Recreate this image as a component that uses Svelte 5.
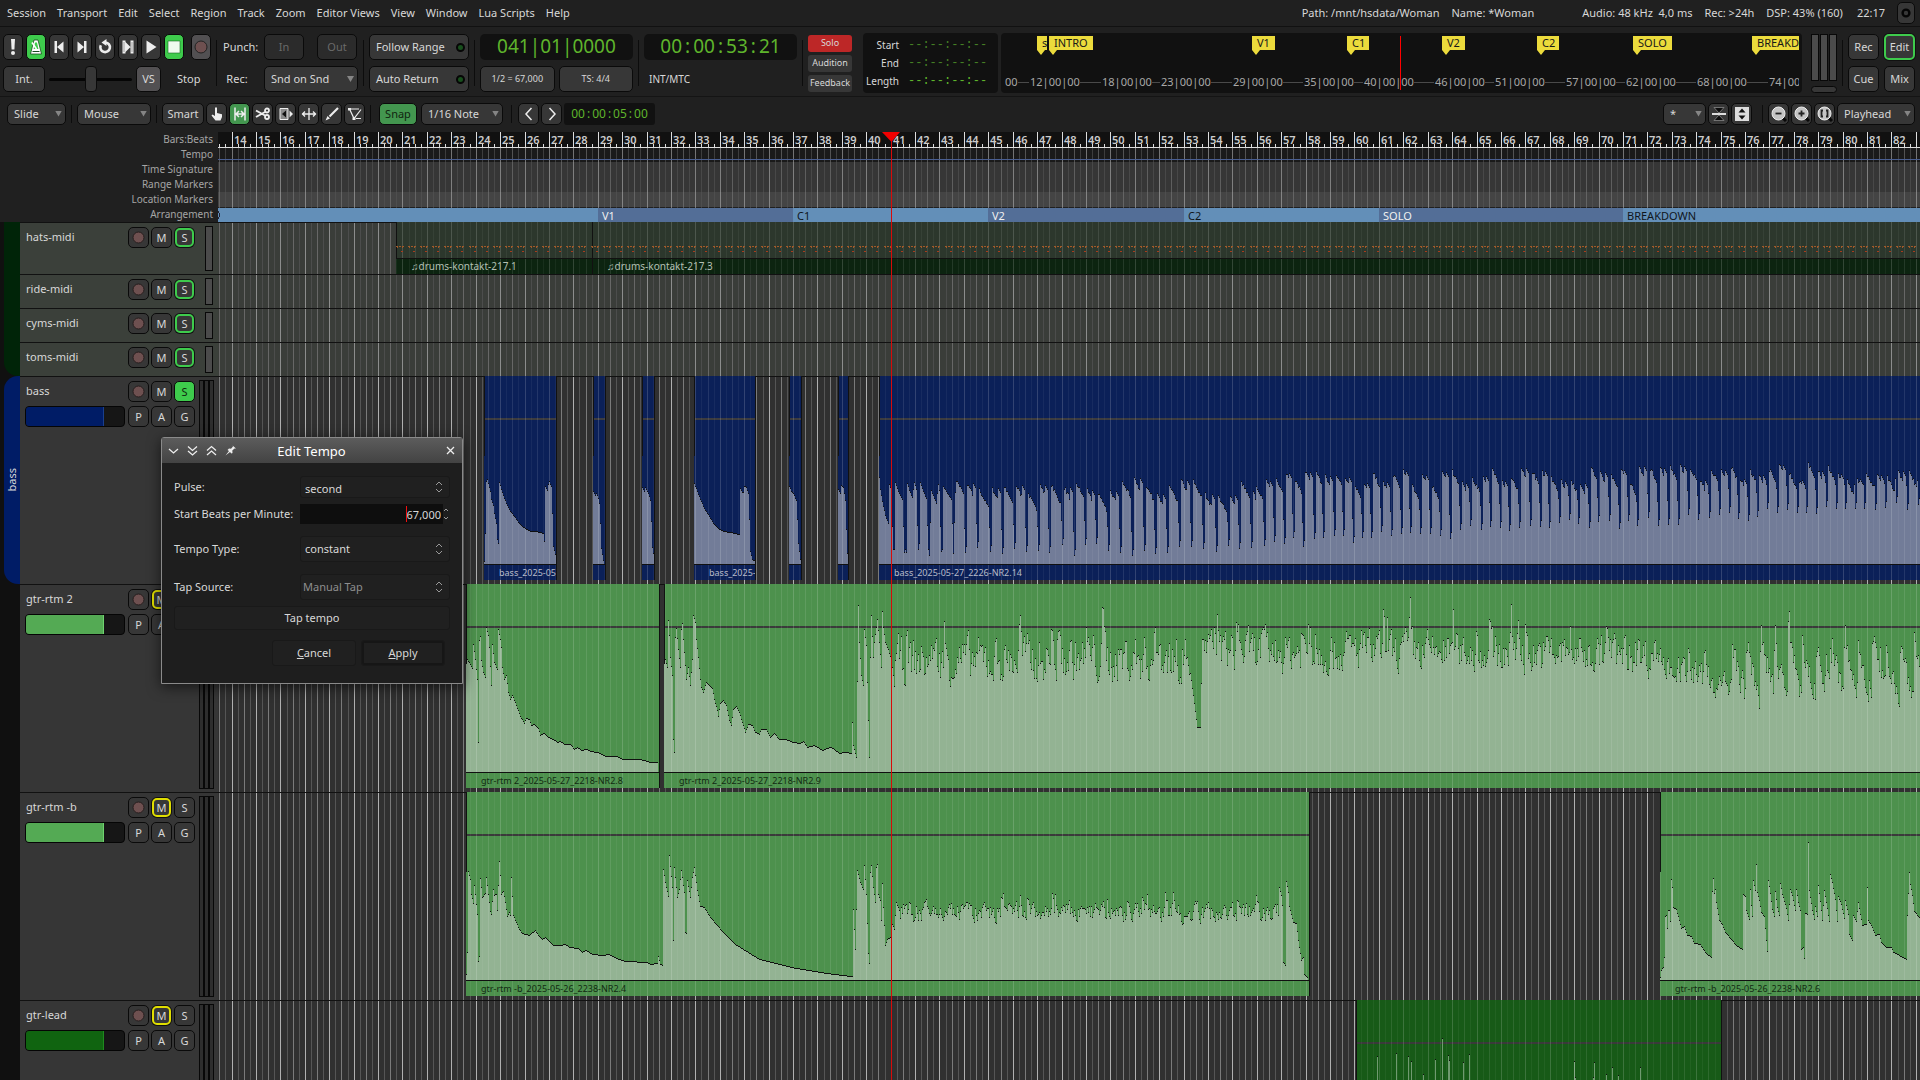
<script>
  const menus = ['Session', 'Transport', 'Edit', 'Select', 'Region', 'Track', 'Zoom', 'Editor Views', 'View', 'Window', 'Lua Scripts', 'Help']

  const flags = [
    { x: 36, w: 10, name: 's' },
    { x: 48, w: 44, name: 'INTRO' },
    { x: 251, w: 23, name: 'V1' },
    { x: 346, w: 22, name: 'C1' },
    { x: 441, w: 23, name: 'V2' },
    { x: 536, w: 22, name: 'C2' },
    { x: 632, w: 39, name: 'SOLO' },
    { x: 751, w: 60, name: 'BREAKDOWN' }
  ]
  const stamps = [[4, '00'], [29, '12'], [101, '18'], [160, '23'], [232, '29'], [303, '35'], [363, '40'], [434, '46'], [494, '51'], [565, '57'], [625, '62'], [696, '68'], [768, '74']]

  // timeline geometry: x of a bar line inside the canvas
  const BAR = 24.41
  const barX = (n) => Math.floor(14.1 + BAR * (n - 14))
  let rulerWidth = 0
  $: bars = Array.from({ length: 150 }, (_, i) => i + 14).filter((n) => barX(n) + 17 < rulerWidth)

  function lines(beats, top = 0) {
    let d = ''
    for (let n = 13; n < 164; n++) {
      for (const b of beats) {
        const x = Math.floor(14.1 + BAR * (n - 14) + (BAR / 4) * b)
        if (x >= 0) d += `M${x + 0.5} ${top}V300`
      }
    }
    return d
  }
  const barLines = lines([0])
  const halfLines = lines([2])
  const beatLines = lines([1, 3])
  const ticks = lines([1, 2, 3], 12)

  const sections = [
    { bar: 0, name: '', dark: false },
    { bar: 29, name: 'V1', dark: true },
    { bar: 37, name: 'C1', dark: false },
    { bar: 45, name: 'V2', dark: true },
    { bar: 53, name: 'C2', dark: false },
    { bar: 61, name: 'SOLO', dark: true },
    { bar: 71, name: 'BREAKDOWN', dark: false }
  ]

  let seed = 7
  function rnd() {
    seed = (seed * 16807) % 2147483647
    return seed / 2147483647
  }

  // key points [x, height] joined by straight lines, one value per column
  function columns(p) {
    const out = []
    for (let i = 0; i < p.length - 2; i += 2) {
      const [x0, h0, x1, h1] = [p[i], p[i + 1], p[i + 2], p[i + 3]]
      for (let x = x0; x < x1; x++) out.push(Math.round(h0 + ((h1 - h0) * (x - x0)) / (x1 - x0)))
    }
    out.push(p[p.length - 1])
    return out
  }

  // decaying notes with a short gap between them, every other one picked twice
  function plucks(len, period, top, floor, drop) {
    const out = []
    let twice = false
    while (out.length < len) {
      const f = out.length / len
      const n = Math.round(period - 1 + rnd() * 2)
      const peak = top(f) + (rnd() - 0.5) * 18
      const low = floor(f) + rnd() * 12
      for (let i = 0; i < n; i++) {
        let h = peak - i * drop + (rnd() - 0.5) * 4
        if (twice && i >= n - 6) h = peak - (i - n + 6) * drop
        if (i === n - 3) h = low + 24
        if (i === n - 2) h = low
        if (i === n - 1) h = low + 6
        out.push(Math.round(h))
      }
      twice = !twice
    }
    return out.slice(0, len)
  }

  function noisy(len, mean, amp) {
    const out = []
    let v = 0
    for (let i = 0; i < len; i++) {
      v = v * 0.45 + (rnd() - 0.5) * amp
      if (rnd() > 0.94) v += amp * 0.7
      out.push(Math.round(mean(i / len) + v))
    }
    return out
  }

  const hit = [0, 72, 2, 68, 3, 70, 5, 65, 6, 60, 7, 40, 8, 15, 10, 3]

  const bass1 = columns([0, 2, 1, 30, 2, 82, 3, 84, 4, 80, 6, 72, 7, 64, 9, 58, 10, 50, 12, 40, 13, 24, 14, 20, 15, 81, 17, 74, 19, 68, 22, 60, 26, 52, 30, 47, 34, 41, 38, 37, 42, 34, 47, 32, 52, 32, 59, 30, 60, 22, 61, 77, 63, 73, 64, 79, 65, 82, 66, 79, 67, 77, 68, 50, 69, 17, 71, 9, 72, 2])
  const bass4 = columns([0, 80, 3, 72, 6, 64, 10, 55, 15, 47, 19, 40, 24, 35, 29, 32, 36, 31, 45, 29, 46, 75, 48, 71, 49, 71, 50, 77, 52, 76, 54, 70, 55, 44, 56, 12, 58, 4, 62, 1])
  const bass7 = [
    ...columns([0, 86, 1, 74, 3, 62, 6, 48, 9, 40, 10, 79, 11, 76, 12, 64, 13, 37, 14, 14, 15, 14, 16, 81, 19, 72, 23, 64, 24, 37, 25, 11, 26, 14, 27, 11, 28, 80, 30, 73, 33, 66, 35, 81, 37, 74, 38, 38, 39, 14, 40, 20, 41, 81, 44, 72, 47, 65, 48, 38, 49, 14, 50, 8, 52, 73, 55, 65, 57, 60, 59, 79, 60, 73, 61, 37, 62, 12, 63, 14, 64, 77, 68, 70, 72, 64, 73, 40, 74, 10, 76, 71]),
    ...plucks(300, 12, () => 76, () => 8, 2),
    ...plucks(1000, 10, (f) => 84 + f * 12, (f) => 14 + f * 60, 2)
  ]

  const rtm8 = columns([0, 114, 6, 103, 7, 127, 9, 112, 11, 92, 12, 29, 13, 131, 14, 135, 15, 111, 17, 99, 19, 94, 20, 144, 22, 136, 23, 124, 25, 86, 26, 127, 28, 109, 31, 102, 32, 142, 34, 132, 35, 124, 36, 104, 38, 92, 40, 96, 42, 79, 44, 72, 46, 76, 50, 66, 54, 55, 58, 48, 60, 53, 63, 52, 65, 46, 68, 47, 72, 43, 74, 36, 78, 38, 82, 34, 87, 32, 91, 29, 94, 30, 98, 27, 104, 27, 108, 22, 111, 24, 115, 21, 120, 22, 124, 20, 131, 19, 140, 15, 150, 15, 157, 12, 174, 12, 184, 9, 191, 9])
  const rtm9 = [
    ...columns([0, 116, 3, 104, 4, 151, 5, 136, 6, 114, 8, 96, 9, 32, 10, 19, 11, 134, 12, 143, 14, 122, 16, 104, 17, 142, 18, 148, 19, 132, 21, 106, 22, 92, 24, 104, 26, 86, 28, 112, 29, 156, 31, 149, 32, 132, 34, 114, 36, 92, 37, 84, 39, 79, 42, 89, 45, 86, 48, 83, 50, 72, 53, 61, 54, 55, 56, 68, 59, 71, 62, 66, 65, 51, 67, 46, 69, 62, 72, 65, 75, 59, 77, 52, 79, 46, 81, 39, 84, 47, 88, 46, 91, 39, 95, 37, 97, 42, 102, 42, 106, 34, 110, 38, 115, 32, 121, 32, 129, 29, 136, 28, 139, 30, 143, 24, 150, 26, 158, 21, 163, 23, 167, 24, 175, 18, 181, 19, 187, 18, 188, 49, 189, 26, 192, 14, 194, 166, 195, 129, 197, 96, 199, 86, 200, 142, 202, 126, 204, 51, 205, 14, 206, 114, 207, 156, 209, 114, 210, 129, 213, 152, 215, 129, 217, 104, 218, 160, 219, 144, 221, 129, 224, 122, 227, 111, 229, 96, 230, 85]),
    ...noisy(295, (f) => 110 + f * 4, 40),
    ...columns([0, 98, 4, 68, 7, 44, 10, 44, 11, 88]),
    ...noisy(460, (f) => 120 - Math.max(0, f - 0.5) * 8, 34),
    ...noisy(70, (f) => 108 - f * 26, 24),
    ...Array.from({ length: 60 }, () => noisy(14, (f) => 122 - f * 48, 26)).flat()
  ]

  const rtmb4 = [
    ...columns([0, 5, 1, 27, 2, 108, 4, 100, 5, 85, 7, 76, 8, 94, 10, 75, 11, 65, 12, 18, 13, 23, 14, 101, 16, 82, 19, 86, 20, 102, 22, 85, 24, 68, 25, 65, 27, 90, 28, 84, 30, 85, 31, 69, 33, 118, 34, 104, 35, 85, 37, 88, 39, 77, 41, 63, 43, 67, 44, 64, 45, 102, 47, 64, 50, 57, 53, 50, 56, 46, 63, 44, 69, 49, 72, 44, 76, 40, 79, 42, 87, 34, 94, 34, 99, 35, 103, 32, 112, 31, 116, 27, 120, 29, 126, 25, 137, 24, 142, 25, 150, 21, 159, 18, 181, 17, 184, 15, 191, 16, 192, 23, 194, 15, 196, 14, 197, 110, 199, 97, 202, 83, 203, 124, 206, 92, 207, 39, 208, 112, 211, 82, 213, 90, 215, 109, 218, 87, 219, 47, 220, 46, 221, 99, 224, 82, 226, 102, 228, 112, 231, 89, 234, 73, 238, 72, 244, 62, 256, 48, 269, 35, 293, 20, 330, 11, 360, 6, 385, 3, 386, 3, 387, 70, 389, 30, 391, 109, 394, 97, 397, 90, 398, 114, 400, 85, 402, 26, 403, 16, 404, 107, 405, 114, 407, 92, 409, 77, 410, 112, 411, 115, 412, 85, 414, 79, 415, 59, 416, 96, 417, 72, 418, 54, 419, 34, 421, 40, 424, 42, 426, 55, 428, 50, 430, 77, 433, 69]),
    ...noisy(379, () => 67, 17),
    ...columns([0, 92, 2, 84, 3, 74, 4, 17, 6, 14, 7, 98, 9, 87, 10, 73, 14, 57, 17, 56, 19, 39, 22, 19, 24, 22, 25, 5, 28, 2])
  ]
  const rtmb6 = columns([0, 2, 1, 9, 3, 12, 4, 22, 5, 63, 6, 64, 7, 51, 8, 69, 9, 69, 10, 58, 11, 100, 12, 92, 13, 72, 16, 70, 19, 59, 21, 51, 24, 53, 27, 44, 31, 43, 34, 36, 40, 35, 43, 30, 46, 26, 51, 22, 52, 88, 53, 101, 54, 86, 55, 90, 56, 77, 59, 59, 62, 55, 65, 47, 71, 40, 76, 34, 82, 30, 83, 85, 85, 83, 86, 69, 89, 60, 90, 90, 91, 74, 92, 63, 93, 99, 95, 89, 96, 115, 97, 87, 99, 79, 101, 67, 104, 63, 106, 39, 107, 28, 108, 99, 110, 86, 112, 70, 114, 63, 115, 88, 117, 72, 119, 64, 120, 96, 122, 85, 126, 71, 128, 59, 130, 90, 132, 84, 135, 69, 136, 90, 138, 77, 140, 69, 141, 30, 143, 32, 144, 21, 145, 66, 147, 65, 148, 137, 149, 89, 152, 69, 154, 60, 155, 73, 157, 63, 158, 94, 160, 78, 162, 59, 164, 89, 166, 77, 169, 58, 170, 105, 172, 97, 175, 80, 177, 58, 178, 83, 181, 75, 184, 61, 185, 79, 188, 65, 189, 45, 192, 39, 193, 64, 196, 58, 198, 77, 200, 65, 202, 54, 206, 55, 207, 92, 208, 59, 212, 52, 215, 44, 219, 45, 221, 37, 226, 32, 231, 32, 233, 27, 239, 24, 246, 20, 247, 64, 249, 107, 250, 95, 252, 84, 254, 68, 259, 62, 300, 40])

  const lead = Array(365).fill(0)
  const spikes = [21, 131, 40, 134, 52, 131, 55, 126, 67, 113, 79, 128, 86, 149, 92, 132, 93, 127, 107, 125, 113, 133, 218, 126, 219, 110, 238, 125, 237, 110, 250, 113, 256, 120, 262, 112, 284, 120]
  for (let i = 0; i < spikes.length; i += 2) lead[spikes[i]] = spikes[i + 1]

  const BASE = 188
  function fillPath(x, wave) {
    return `M${x} ${BASE}` + wave.map((h, i) => `V${BASE - h}H${x + i + 1}`).join('') + `V${BASE}Z`
  }
  function edgePath(x, wave) {
    return wave.map((h, i) => `M${x + i} ${BASE - h - 0.5}h1`).join('')
  }

  const far = 3400
  const bassFill = { fill: '#0b2058', wave: '#727c98', line: '#3c3c40', text: '#b8bcc8' }
  const rtmFill = { fill: '#4d914d', wave: '#93b393', line: '#3a3a3a', text: '#122a12' }
  const leadFill = { fill: '#175a17', wave: '#709a70', line: '#3a3a3a', text: '#122a12' }

  const tracks = [
    { name: 'hats-midi', midi: true, h: 52, solo: 'on', notes: true, regions: [] },
    { name: 'ride-midi', midi: true, h: 34, solo: 'on', regions: [] },
    { name: 'cyms-midi', midi: true, h: 34, solo: 'on', regions: [] },
    { name: 'toms-midi', midi: true, h: 34, solo: 'on', regions: [] },
    {
      name: 'bass', h: 208, solo: 'full', color: '#001c66', tip: '#1a3f8c', ...bassFill,
      regions: [
        { x: 266, w: 72, wave: bass1, label: 'bass_2025-05' },
        { x: 375, w: 12, wave: columns(hit) },
        { x: 424, w: 12, wave: columns([0, 76, 2, 72, 3, 76, 6, 70, 8, 63, 9, 42, 10, 16, 12, 4]) },
        { x: 476, w: 61, wave: bass4, label: 'bass_2025-' },
        { x: 571, w: 12, wave: columns([0, 77, 2, 72, 4, 70, 7, 63, 8, 44, 9, 20, 11, 4]) },
        { x: 620, w: 10, wave: columns([0, 74, 2, 70, 3, 78, 5, 76, 7, 63, 8, 34, 9, 10]) },
        { x: 661, w: far, wave: bass7, label: 'bass_2025-05-27_2226-NR2.14' }
      ]
    },
    {
      name: 'gtr-rtm 2', h: 208, mute: true, color: '#54aa54', tip: '#6fd26f', ...rtmFill,
      regions: [
        { x: 248, w: 193, wave: rtm8, label: 'gtr-rtm 2_2025-05-27_2218-NR2.8' },
        { x: 446, w: far, wave: rtm9, label: 'gtr-rtm 2_2025-05-27_2218-NR2.9' }
      ]
    },
    {
      name: 'gtr-rtm -b', h: 208, mute: true, color: '#54aa54', tip: '#6fd26f', ...rtmFill,
      regions: [
        { x: 248, w: 843, wave: rtmb4, label: 'gtr-rtm -b_2025-05-26_2238-NR2.4' },
        { x: 1442, w: far, wave: rtmb6, label: 'gtr-rtm -b_2025-05-26_2238-NR2.6' }
      ]
    },
    {
      name: 'gtr-lead', h: 208, mute: true, color: '#106410', tip: '#1f8a1f', ...leadFill,
      regions: [{ x: 1138, w: 365, wave: lead }]
    }
  ]

  let hatNotes = ''
  for (let x = 178; x < far; x += 12.2) {
    const a = Math.floor(x)
    hatNotes += `M${a} 24.5h2M${a + 3} 24.5h2M${a + 6} 24.5h2M${a + 1} 25.5h1M${a + 6} 25.5h1`
  }
  let hatLow = ''
  for (let x = 183; x < far; x += 12.2) hatLow += `M${Math.floor(x)} 29.5h2`

  let bpm = '67,000'
  let shuttle = 50
</script>

{#snippet grid()}
  <path d={beatLines} class="beat" />
  <path d={halfLines} class="half" />
  <path d={barLines} class="bar" />
{/snippet}

{#snippet pair(text)}
  {#each text.split(':') as part, i}{#if i > 0}<span class="sep">:</span>{/if}{part}{/each}
{/snippet}

<div class="app">
  <header class="menubar">
    <nav>
      {#each menus as m}<button class="menu">{m}</button>{/each}
    </nav>
    <div class="status">
      <span>Path: /mnt/hsdata/Woman</span>
      <span class="gap-l">Name: *Woman</span>
      <span>Audio: 48 kHz&nbsp; 4,0 ms</span>
      <span>Rec: &gt;24h</span>
      <span>DSP: 43% (160)</span>
      <span class="clk">22:17</span>
      <button class="btn err" aria-label="Error log"><svg width="10" height="10"><circle cx="5" cy="5" r="3.4" fill="none" stroke="#050505" stroke-width="2.4" /></svg></button>
    </div>
  </header>

  <section class="transport">
    <div class="stack keys">
      <div class="line">
        <button class="btn key" aria-label="Panic"><svg width="16" height="18"><path d="M6 1h4l-.6 10.500h-2.800z" fill="#eee" /><circle cx="8" cy="15" r="2" fill="#eee" /></svg></button>
        <button class="btn key lit" aria-label="Metronome"><svg width="16" height="18"><path d="M6 2h4l3.500 14h-11z" fill="#fff" stroke="#1a4a20" stroke-width=".8" /><path d="M7 4.500h2l1.400 6.500H5.600z" fill="#3ecb4c" /><path d="M8.500 11L4 4.500" stroke="#fff" stroke-width="1.600" /><path d="M4.500 13.500h7" stroke="#1a4a20" /></svg></button>
        <button class="btn key" aria-label="Go to start"><svg width="16" height="18"><path d="M3.500 3H6v12H3.500zM12.500 3.500v11L6 9z" fill="#eee" /></svg></button>
        <button class="btn key" aria-label="Go to end"><svg width="16" height="18"><path d="M10 3h2.500v12H10zM3.500 3.500v11L10 9z" fill="#eee" /></svg></button>
        <button class="btn key" aria-label="Loop"><svg width="16" height="18"><path d="M3.800 7.200A4.800 4.800 0 1 0 8.500 4.500" fill="none" stroke="#eee" stroke-width="2.600" /><path d="M9.500 1v7L4.500 4.500z" fill="#eee" /></svg></button>
        <button class="btn key" aria-label="Play range"><svg width="16" height="18"><path d="M2.500 2.500h3v13h-3zM10.500 2.500h3v13h-3zM5.500 4v10l5-5z" fill="#eee" /><path d="M4 4v10M12 4v10" stroke="#888" stroke-width=".8" /></svg></button>
        <button class="btn key" aria-label="Play"><svg width="16" height="18"><path d="M3.500 2.500v13L13.500 9z" fill="#eee" /></svg></button>
        <button class="btn key lit" aria-label="Stop"><svg width="16" height="18"><path d="M2 3h12v12H2z" fill="#effbef" stroke="#1a6a24" stroke-width=".6" /></svg></button>
        <button class="btn key rec" aria-label="Record"><svg width="16" height="18"><circle cx="8" cy="9" r="6" fill="#6e5050" stroke="#222" /></svg></button>
      </div>
      <div class="line">
        <button class="btn int">Int.</button>
        <input class="shuttle" type="range" min="0" max="100" bind:value={shuttle} aria-label="Shuttle speed" />
        <button class="btn vs">VS</button>
        <span class="state">Stop</span>
      </div>
    </div>
    <i class="div"></i>
    <div class="stack punch">
      <div class="line"><span class="lbl">Punch:</span><button class="btn off">In</button><button class="btn off">Out</button></div>
      <div class="line">
        <label class="lbl" for="recmode">Rec:</label>
        <span class="drop grow"><select id="recmode"><option>Snd on Snd</option></select></span>
      </div>
    </div>
    <i class="div"></i>
    <div class="stack follow">
      <button class="btn">Follow Range<i class="led"></i></button>
      <button class="btn">Auto Return<i class="led"></i></button>
    </div>
    <i class="div"></i>
    <div class="stack clock">
      <div class="digits">041|01|0000</div>
      <div class="line small"><button class="btn">1/2 = 67,000</button><button class="btn">TS: 4/4</button></div>
    </div>
    <i class="div"></i>
    <div class="stack clock">
      <div class="digits">{@render pair('00:00:53:21')}</div>
      <div class="line small sync">INT/MTC</div>
    </div>
    <i class="div"></i>
    <div class="alerts">
      <button class="solo">Solo</button>
      <button>Audition</button>
      <button>Feedback</button>
    </div>
    <dl class="selection">
      <dt>Start</dt><dd>--:--:--:--</dd>
      <dt>End</dt><dd>--:--:--:--</dd>
      <dt>Length</dt><dd class="len">--:--:--:--</dd>
    </dl>
    <div class="mini">
      <svg width="100%" height="60">
        {#each stamps as [x, n], i}
          <text x={x} y="53" class="stamp">{n}{#if i > 0}|00|00{/if}</text>
          {#if i < stamps.length - 1}
            <path d="M{x + (i ? 50 : 13)} 49.500H{stamps[i + 1][0] - 1}" stroke="#4a4a4a" />
          {/if}
        {/each}
        {#each flags as f}
          <path d="M{f.x} 3h{f.w}v14h{-f.w + 8}l-4 5l-4 -5z" fill="#ecdb3c" />
          <text x={f.x + 5} y="14" class="flag">{f.name}</text>
        {/each}
        <path d="M399.500 3v54" stroke="#f00" />
      </svg>
    </div>
    <div class="mainmeter">
      <div><i></i><i></i><i></i></div>
      <button aria-label="Reset peak"></button>
    </div>
    <i class="div"></i>
    <div class="views">
      <button class="btn">Rec</button><button class="btn ring">Edit</button>
      <button class="btn">Cue</button><button class="btn">Mix</button>
    </div>
  </section>

  <section class="tools">
    <span class="drop w59"><select aria-label="Edit mode"><option>Slide</option></select></span>
    <i class="div"></i>
    <span class="drop w74"><select aria-label="Edit point"><option>Mouse</option></select></span>
    <i class="div"></i>
    <div class="set">
      <button class="btn smart">Smart</button>
      <button class="btn tool" aria-label="Grab"><svg width="16" height="16"><path d="M6 1.500h2V7l5 1.200V11l-1.500 3.500h-5L2.500 9.500l1-1L6 10z" fill="#eee" /></svg></button>
      <button class="btn tool on" aria-label="Range"><svg width="16" height="16"><path d="M3 1.500v13M13 1.500v13M4 8h8M7 5L4 8l3 3M9 5l3 3l-3 3" fill="none" stroke="#eee" stroke-width="1.500" /></svg></button>
      <button class="btn tool" aria-label="Cut"><svg width="16" height="16"><path d="M1 4.500L10 9.500M1 11L10 6" stroke="#eee" stroke-width="2" /><circle cx="12" cy="4.500" r="2" fill="none" stroke="#eee" stroke-width="1.800" /><circle cx="12" cy="11" r="2" fill="none" stroke="#eee" stroke-width="1.800" /></svg></button>
      <button class="btn tool" aria-label="Stretch"><svg width="16" height="16"><path d="M2 2.500h8v11H2z" fill="#8a8a8a" stroke="#eee" /><path d="M8 4.500v7L4 8z" fill="#111" /><path d="M11.500 4.500v7L15 8z" fill="#eee" /></svg></button>
      <button class="btn tool" aria-label="Audition"><svg width="16" height="16"><path d="M8 2v12M1 8h14M4 5.500L1.500 8L4 10.500M12 5.500L14.500 8L12 10.500" fill="none" stroke="#eee" stroke-width="1.300" /></svg></button>
      <button class="btn tool" aria-label="Draw"><svg width="16" height="16"><path d="M5.500 10.500L14 2" stroke="#eee" stroke-width="2.200" /><path d="M1.500 14.500l2-4.500l2.500 2.500z" fill="#eee" /></svg></button>
      <button class="btn tool" aria-label="Internal edit"><svg width="16" height="16"><path d="M3 3h9M3 4l4 8.500L14 3.500M9 12.500h5" fill="none" stroke="#eee" stroke-width="1.200" /><path d="M1 2h3v2.500H1zM5.500 11.500h3V14h-3z" fill="#eee" /></svg></button>
    </div>
    <i class="div"></i>
    <div class="set snapset">
      <button class="btn snap">Snap</button>
      <span class="drop w82"><select aria-label="Grid"><option>1/16 Note</option></select></span>
    </div>
    <i class="div"></i>
    <div class="set nudgeset">
      <button class="btn tool" aria-label="Previous"><svg width="16" height="16"><path d="M10.500 2L5 8l5.500 6" fill="none" stroke="#eee" stroke-width="1.500" /></svg></button>
      <button class="btn tool" aria-label="Next"><svg width="16" height="16"><path d="M5.500 2L11 8l-5.500 6" fill="none" stroke="#eee" stroke-width="1.500" /></svg></button>
      <div class="nudge">{@render pair('00:00:05:00')}</div>
    </div>
    <div class="set right">
      <span class="drop w43"><select aria-label="Visible tracks"><option>*</option></select></span>
      <button class="btn tool" aria-label="Shrink tracks"><svg width="16" height="16"><path d="M3 1.500h10L8 7zM3 14.500h10L8 9z" fill="#0c0c0c" stroke="#888" stroke-width=".8" /><path d="M1 7h14v2H1z" fill="#ddd" /></svg></button>
      <button class="btn tool" aria-label="Expand tracks"><svg width="16" height="16"><path d="M1 1h14v14H1z" fill="#ddd" /><path d="M4.500 6.500h7L8 2.500zM4.500 9.500h7L8 13.500z" fill="#111" /></svg></button>
    </div>
    <i class="div"></i>
    <div class="set">
      {#each ['M4.500 7.500h6', 'M4.500 7.500h6M7.500 4.500v6', 'M6 4.500H4.500v6H6M9 4.500h1.500v6H9'] as d, i}
        <button class="btn tool" aria-label={['Zoom out', 'Zoom in', 'Zoom to session'][i]}>
          <svg width="16" height="16"><path d="M11 11l4 4" stroke="#080808" stroke-width="3" /><circle cx="7.500" cy="7.500" r="6.500" fill="#c4c4c4" stroke="#eee" /><path {d} fill="none" stroke="#222" stroke-width="1.800" /></svg>
        </button>
      {/each}
      <span class="drop w78"><select aria-label="Zoom focus"><option>Playhead</option></select></span>
    </div>
  </section>

  <main class="editor">
    <div class="rulers">
      <div class="names">
        {#each ['Bars:Beats', 'Tempo', 'Time Signature', 'Range Markers', 'Location Markers', 'Arrangement'] as r}<span>{r}</span>{/each}
      </div>
      <div class="ruler" bind:clientWidth={rulerWidth}>
        <svg width="100%" height="90">
          <rect width="100%" height="15" fill="#111" />
          <rect y="15" width="100%" height="15" fill="#1a1a1a" />
          <rect y="30" width="100%" height="30" fill="#363636" />
          <rect y="60" width="100%" height="15" fill="#444" />
          <g class="faint">{@render grid()}</g>
          <rect width="100%" height="15" fill="#111" />
          <path d={barLines} class="tick" />
          <path d={ticks} class="tick" />
          {#each bars as n}<text x={barX(n) + 2} y="12" class="num">{n}</text>{/each}
          <path d="M0 15.500H4000" stroke="#ddd" />
          <path d="M0 27.500H4000" stroke="#4a5f92" />
          {#each sections as s}
            <rect x={Math.max(0, barX(s.bar))} y="76" width={far} height="14" fill={s.dark ? '#536e97' : '#638fb8'} />
            <text x={barX(s.bar) + 4} y="88" class="sect" fill={s.dark ? '#f0f0f0' : '#10161c'}>{s.name}</text>
          {/each}
          <path d="M0 79.500q3 3.500 0 7" fill="none" stroke="#223" />
        </svg>
      </div>
    </div>

    <div class="body">
      <aside class="groups">
        <div class="tab drums"></div>
        <div class="tab bassgrp"><span>bass</span></div>
      </aside>
      <div class="tracks">
        {#each tracks as t, ti}
          <div class="track" class:midi={t.midi} style:height="{t.h}px">
            <div class="head">
              <span class="name">{t.name}</span>
              <div class="controls">
                <button class="btn sq" aria-label="Record enable"><svg width="13" height="13"><circle cx="6.500" cy="6.500" r="5.500" fill="#6e5050" stroke="#251d1d" /></svg></button>
                <button class="btn sq" class:mute={t.mute}>M</button>
                <button class="btn sq" class:ring={t.solo === 'on'} class:full={t.solo === 'full'}>S</button>
                {#if !t.midi}
                  <button class="btn sq">P</button>
                  <button class="btn sq">A</button>
                  <button class="btn sq">G</button>
                {/if}
              </div>
              {#if !t.midi}
                <div class="fader"><i style:background={t.color} style:border-color={t.tip}></i></div>
              {/if}
              <div class="meter">{#if t.midi}<i></i>{:else}<i></i><i></i><i></i>{/if}</div>
            </div>
            <svg class="lane" width="100%" height={t.h}>
              <g class:soft={t.midi}>{@render grid()}</g>
              <path d="M0 .5H4000" stroke="#111" />
              {#if t.notes}
                <rect x="178" width={far} height="37" fill="#2c372c" />
                <rect x="178" y="37" width={far} height="15" fill="#0c2410" />
                <clipPath id="hats"><rect x="178" width={far} height="52" /></clipPath>
                <g clip-path="url(#hats)" class="over">{@render grid()}</g>
                <path d="M178 36.500H4000M178.500 0V36M374.500 0V52" stroke="#111" />
                <path d={hatNotes} stroke="#a05a2a" />
                <path d={hatLow} stroke="#a83c1c" />
                <text x="193" y="48" class="mlabel">♫drums-kontakt-217.1</text>
                <text x="389" y="48" class="mlabel">♫drums-kontakt-217.3</text>
              {/if}
              {#each t.regions as r, ri}
                <clipPath id="r{ti}-{ri}"><rect x={r.x} width={r.w} height="204" /></clipPath>
                <g clip-path="url(#r{ti}-{ri})">
                  <rect x={r.x} width={r.w} height="204" fill={t.fill} />
                  <path d="M{r.x} 43H{r.x + r.w}" stroke={t.line} stroke-width="2" />
                  <path d={fillPath(r.x, r.wave)} fill={t.wave} />
                  <g class="over">{@render grid()}</g>
                  <path d={edgePath(r.x, r.wave)} stroke="#101010" />
                  <path d="M{r.x} 188.500H{r.x + r.w}" stroke="#101010" />
                  {#if r.label}<text x={r.x + 15} y="200" class="rlabel" fill={t.text}>{r.label}</text>{/if}
                </g>
                <path d="M{r.x + 0.5} 0V80M{r.x + r.w + 0.5} 0V204" stroke="#111" />
              {/each}
            </svg>
          </div>
        {/each}
      </div>
    </div>

    <svg class="playhead" width="20" height="100%">
      <path d="M10.500 0V2000" stroke="#d80a0a" />
      <path d="M1 0h18L10.500 10z" fill="#f00000" />
    </svg>
  </main>

  <div class="dialog" role="dialog" aria-label="Edit Tempo">
    <div class="title">
      <button aria-label="Menu"><svg width="13" height="13"><path d="M2 5l4.500 4L11 5" /></svg></button>
      <button aria-label="Lower"><svg width="13" height="13"><path d="M2 2.500l4.500 4l4.500-4M2 7l4.500 4L11 7" /></svg></button>
      <button aria-label="Raise"><svg width="13" height="13"><path d="M2 6.500l4.500-4l4.500 4M2 11l4.500-4l4.500 4" /></svg></button>
      <button aria-label="Pin"><svg width="13" height="13"><path class="pin" d="M1.500 11.500L5 7L3.500 6L5 4.500l2 .2L9 2.500L8.500 1.500L12 4.500L10.500 4.500L8.300 6.500L8.500 9L7.300 9.500L6 8z" /></svg></button>
      <h2>Edit Tempo</h2>
      <button aria-label="Close"><svg width="13" height="13"><path d="M3 3l7 7M10 3l-7 7" /></svg></button>
    </div>
    <form class="form" on:submit|preventDefault>
      <label for="pulse">Pulse:</label>
      <span class="field h21"><select id="pulse"><option>second</option></select><svg width="9" height="12"><path d="M1 4l3-3l3 3M1 8l3 3l3-3" /></svg></span>
      <label class="m0" for="bpm">Start Beats per Minute:</label>
      <span class="spin m0"><input id="bpm" bind:value={bpm} /><i class="caret"></i><svg width="7" height="18"><path d="M1 6l2-2l2 2M1 12l2 2l2-2" /></svg></span>
      <label class="m1" for="type">Tempo Type:</label>
      <span class="field h25 m1"><select id="type"><option>constant</option></select><svg width="9" height="12"><path d="M1 4l3-3l3 3M1 8l3 3l3-3" /></svg></span>
      <label class="m1" for="tap">Tap Source:</label>
      <span class="field h25 m1 dim"><select id="tap" disabled><option>Manual Tap</option></select><svg width="9" height="12"><path d="M1 4l3-3l3 3M1 8l3 3l3-3" /></svg></span>
      <button class="flat tapbtn" type="button">Tap tempo</button>
      <div class="actions">
        <button class="flat" type="button"><u>C</u>ancel</button>
        <button class="flat def"><u>A</u>pply</button>
      </div>
    </form>
  </div>
</div>

<style>
  :global(body) {
    background: #202020;
    overflow: hidden;
  }

  .app {
    position: relative;
    display: flex;
    flex-direction: column;
    height: 100vh;
    overflow: hidden;
    background: #202020;
    color: #d8d8d8;
    font: 11px/16px 'Noto Sans', sans-serif;
  }

  button,
  select,
  input {
    font: inherit;
    color: inherit;
    margin: 0;
    padding: 0;
    border: 0;
    background: none;
    box-sizing: border-box;
  }

  button {
    white-space: nowrap;
  }

  svg {
    display: block;
    flex: none;
  }

  .menubar {
    display: flex;
    justify-content: space-between;
    align-items: center;
    height: 26px;
    flex: none;
    border-bottom: 1px solid #111;
  }

  nav {
    display: flex;
    gap: 11px;
    padding-left: 7px;
  }

  .status {
    display: flex;
    align-items: center;
    gap: 12px;
    padding-right: 5px;
  }

  .gap-l {
    margin-right: 36px;
  }

  .clk {
    margin-left: 2px;
  }

  .btn {
    display: flex;
    align-items: center;
    justify-content: center;
    background: #373737;
    border: 1px solid #0a0a0a;
    border-radius: 5px;
    height: 26px;
  }

  .err {
    width: 18px;
    height: 22px;
  }

  .transport {
    display: flex;
    align-items: center;
    flex: none;
    height: 60px;
    padding: 6px 5px 3px 3px;
    border-bottom: 1px solid #141414;
  }

  .stack {
    display: flex;
    flex-direction: column;
    gap: 6px;
    flex: none;
  }

  .line {
    display: flex;
    height: 26px;
    align-items: center;
  }

  .div {
    width: 1px;
    height: 46px;
    background: #0c0c0c;
    margin: 0 5px;
    flex: none;
  }

  .keys {
    width: 208px;
  }

  .keys .line:first-child {
    gap: 3px;
  }

  .key {
    width: 20px;
  }

  .lit {
    background: #3ecb4c;
  }

  .rec {
    margin-left: auto;
    background: #525052;
  }

  .int {
    width: 42px;
  }

  .shuttle {
    appearance: none;
    width: 83px;
    height: 26px;
    margin: 0 4px;
  }

  .shuttle::-webkit-slider-runnable-track {
    height: 3px;
    background: #050505;
    border-radius: 2px;
  }

  .shuttle::-webkit-slider-thumb {
    appearance: none;
    width: 12px;
    height: 26px;
    margin-top: -12px;
    background: #373737;
    border: 1px solid #0a0a0a;
    border-radius: 4px;
  }

  .vs {
    width: 25px;
    background: #525052;
  }

  .state {
    margin-left: 16px;
  }

  .punch {
    width: 135px;
    margin-left: 1px;
  }

  .punch .line {
    gap: 13px;
  }

  .lbl {
    width: 28px;
    white-space: nowrap;
    text-align: center;
  }

  .punch .off {
    width: 40px;
    color: #6a6a6a;
    background: #2b2b2b;
  }

  .drop {
    display: grid;
    height: 26px;
    align-items: center;
  }

  .drop select {
    appearance: none;
    grid-area: 1 / 1;
    width: 100%;
    height: 100%;
    padding: 0 6px;
    background: #373737;
    border: 1px solid #0a0a0a;
    border-radius: 5px;
  }

  .drop::after {
    content: '';
    grid-area: 1 / 1;
    justify-self: end;
    margin-right: 4px;
    width: 7px;
    height: 6px;
    background: #858585;
    clip-path: polygon(0 0, 100% 0, 50% 100%);
    pointer-events: none;
  }

  .grow {
    flex: 1;
  }

  .follow {
    width: 100px;
  }

  .follow .btn {
    justify-content: space-between;
    padding: 0 3px 0 6px;
  }

  .led {
    width: 5px;
    height: 5px;
    border: 2px solid #060606;
    border-radius: 50%;
    background: #174f1c;
  }

  .clock {
    width: 153px;
  }

  .digits {
    height: 26px;
    border-radius: 5px;
    background: #111;
    color: #5fb52c;
    font-size: 19px;
    line-height: 25px;
    text-align: center;
  }

  .sep {
    padding: 0 3px;
  }

  .small {
    gap: 4px;
    font-size: 9px;
  }

  .small .btn {
    flex: 1;
  }

  .line.sync {
    padding-left: 5px;
    font-size: 10px;
  }

  .alerts {
    display: flex;
    flex-direction: column;
    gap: 3px;
    width: 44px;
  }

  .alerts button {
    height: 17px;
    border-radius: 3px;
    background: #373737;
    font-size: 9px;
  }

  .alerts .solo {
    background: #bd2727;
  }

  .selection {
    display: grid;
    grid-template-columns: 36px 1fr;
    grid-auto-rows: 18px;
    column-gap: 9px;
    align-content: center;
    width: 135px;
    height: 60px;
    margin: 0 3px 0 11px;
    background: #111;
    border-radius: 4px;
    font-size: 10px;
    line-height: 18px;
  }

  .selection dt {
    text-align: right;
  }

  .selection dd {
    margin: 0;
    color: #457f25;
    font: 12px/18px 'Liberation Mono', monospace;
  }

  .selection .len {
    color: #5fb52c;
  }

  .mini {
    flex: 1;
    min-width: 0;
    height: 60px;
    margin-right: 9px;
    background: #111;
    border-right: 3px solid #111;
    border-radius: 4px;
    overflow: hidden;
  }

  .stamp {
    font-size: 11px;
    fill: #a8a8a8;
  }

  .flag {
    font-size: 11px;
    fill: #181818;
  }

  .mainmeter div {
    display: flex;
    gap: 1px;
  }

  .mainmeter i {
    width: 6px;
    height: 45px;
    background: #4b4b4b;
    border: 1px solid #080808;
  }

  .mainmeter button {
    display: block;
    width: 26px;
    height: 7px;
    margin-top: 5px;
    background: #373737;
    border: 1px solid #080808;
    border-radius: 4px;
  }

  .views {
    display: grid;
    grid-template-columns: 31px 31px;
    gap: 6px 5px;
  }

  .ring {
    border: 2px solid #3ecb4c;
    box-shadow: 0 0 0 1px #111;
  }

  .tools {
    display: flex;
    align-items: center;
    flex: none;
    height: 33px;
    padding: 0 5px 2px 7px;
  }

  .tools .div {
    height: 18px;
  }

  .tools .btn,
  .tools .drop {
    height: 22px;
  }

  .set {
    display: flex;
    gap: 2px;
  }

  .right {
    margin: 0 5px 0 auto;
  }

  .tools .tool {
    width: 21px;
  }

  .tools .on,
  .tools .snap {
    background: #43964f;
  }

  .smart {
    width: 42px;
  }

  .snapset {
    gap: 4px;
    margin: 0 3px;
  }

  .nudgeset {
    margin-left: 1px;
  }

  .snap {
    width: 38px;
    color: #10240f;
  }

  .w59 {
    width: 59px;
  }

  .w74 {
    width: 74px;
  }

  .w82 {
    width: 82px;
  }

  .w43 {
    width: 43px;
  }

  .w78 {
    width: 78px;
  }

  .nudge {
    width: 91px;
    height: 22px;
    background: #111;
    border-radius: 3px;
    color: #5fb52c;
    font-size: 12px;
    line-height: 22px;
    text-align: center;
  }

  .nudge .sep {
    padding: 0 2px;
  }

  .editor {
    position: relative;
    flex: 1;
    min-height: 0;
  }

  .rulers {
    display: flex;
  }

  .names {
    display: flex;
    flex-direction: column;
    flex: none;
    width: 213px;
    padding-right: 5px;
    text-align: right;
    color: #a5a5a5;
    font-size: 10px;
    line-height: 15px;
  }

  .ruler,
  .lane {
    flex: 1;
    min-width: 0;
    overflow: hidden;
  }

  .ruler path,
  .lane path {
    shape-rendering: crispEdges;
  }

  .beat {
    stroke: #555;
  }

  .half {
    stroke: #7a7a7a;
  }

  .bar {
    stroke: #b0b0b0;
  }

  .faint {
    opacity: 0.6;
  }

  .soft {
    opacity: 0.7;
  }

  .over path {
    stroke: rgba(255, 255, 255, 0.16);
  }

  .over .beat {
    stroke: rgba(255, 255, 255, 0.05);
  }

  .over .half {
    stroke: rgba(255, 255, 255, 0.1);
  }

  .tick {
    stroke: #ddd;
    clip-path: inset(0 0 285px 0);
  }

  .num {
    font-size: 11px;
    font-weight: 600;
    fill: #ccc;
  }

  .sect {
    font-size: 11px;
  }

  .rlabel {
    font-size: 9px;
  }

  .mlabel {
    font-size: 10px;
    fill: #b4c0b4;
  }

  .body {
    display: flex;
  }

  .groups {
    width: 16px;
    flex: none;
    padding-left: 4px;
    background: #101010;
  }

  .tab {
    display: flex;
    align-items: center;
    justify-content: center;
  }

  .drums {
    height: 154px;
    background: #002408;
    border-radius: 0 0 0 14px;
  }

  .bassgrp {
    height: 208px;
    background: #001c66;
    border-radius: 14px 0 0 14px;
  }

  .bassgrp span {
    writing-mode: vertical-rl;
    rotate: 180deg;
  }

  .tracks {
    flex: 1;
    min-width: 0;
  }

  .track {
    display: flex;
    background: #303030;
  }

  .midi {
    background: #3a3d39;
  }

  .head {
    display: grid;
    grid-template-columns: 103px 67px 1fr;
    grid-template-rows: 21px 21px 1fr;
    row-gap: 4px;
    width: 198px;
    flex: none;
    box-sizing: border-box;
    padding: 4px 4px 0 5px;
    border-top: 1px solid #111;
    background: #363636;
  }

  .midi .head {
    background: #3b403a;
    grid-template-rows: 21px 1fr;
  }

  .name {
    padding-left: 1px;
    line-height: 20px;
  }

  .controls {
    grid-area: 1 / 2 / 3 / 3;
    display: grid;
    grid-template-columns: repeat(3, 21px);
    grid-auto-rows: 21px;
    gap: 4px 2px;
  }

  .sq {
    width: 21px;
    height: 21px;
  }

  .sq.ring,
  .sq.mute {
    width: 19px;
    height: 19px;
    margin: 1px;
  }

  .mute {
    border: 2px solid #e0de00;
    box-shadow: 0 0 0 1px #111;
  }

  .full {
    background: #3ecb4c;
    color: #10240f;
  }

  .fader {
    grid-area: 2 / 1;
    width: 98px;
    background: #161616;
    border: 1px solid #050505;
    border-radius: 4px;
    overflow: hidden;
    height: 19px;
  }

  .fader i {
    display: block;
    width: 79%;
    height: 100%;
    border-right: 1px solid;
  }

  .meter {
    grid-area: 1 / 3 / 4 / 4;
    display: flex;
    justify-content: flex-end;
    margin-top: -1px;
    padding-bottom: 3px;
  }

  .midi .meter {
    grid-area: 1 / 3 / 3 / 4;
    padding: 0 1px 3px 0;
  }

  .meter i {
    width: 3px;
    border: 1px solid #080808;
    background: #2e2e2e;
  }

  .midi .meter i {
    width: 6px;
    background: #4b4b4b;
  }

  .playhead {
    position: absolute;
    left: 881px;
    top: 0;
    pointer-events: none;
  }

  .dialog {
    position: absolute;
    left: 161px;
    top: 437px;
    width: 300px;
    background: #1e1e1e;
    border: 1px solid #8a8a8a;
    border-radius: 3px 3px 0 0;
    box-shadow: 0 3px 14px rgba(0, 0, 0, 0.6);
  }

  .title {
    display: flex;
    align-items: center;
    gap: 6px;
    height: 25px;
    padding: 0 5px;
    background: linear-gradient(#5c5c5c, #434343);
  }

  .title path,
  .form path {
    fill: none;
    stroke: #eee;
    stroke-width: 1.3;
  }

  .title .pin {
    fill: #eee;
    stroke: none;
  }

  .form path {
    stroke: #999;
    stroke-width: 1;
  }

  .title h2 {
    flex: 1;
    margin: 0 58px 0 0;
    text-align: center;
    font-size: 13px;
    font-weight: 400;
    color: #fff;
  }

  .form {
    display: grid;
    grid-template-columns: 126px 150px;
    align-items: center;
    padding: 13px 12px 17px;
  }

  .form label {
    white-space: nowrap;
  }

  .field {
    display: grid;
    align-items: center;
    border: 1px solid #191919;
    border-radius: 3px;
    background: #202020;
  }

  .field select {
    appearance: none;
    grid-area: 1 / 1;
    width: 100%;
    height: 100%;
    padding-left: 4px;
  }

  .field svg {
    grid-area: 1 / 1;
    justify-self: end;
    margin-right: 5px;
    pointer-events: none;
  }

  .h21 {
    height: 20px;
  }

  .h21 select {
    padding-top: 3px;
  }

  .h25 {
    height: 24px;
  }

  .m0 {
    margin-top: 6px;
  }

  .m1 {
    margin-top: 12px;
  }

  .dim {
    color: #8e8e8e;
  }

  .dim select {
    padding-left: 2px;
    opacity: 1;
  }

  .spin {
    position: relative;
    display: flex;
    align-items: center;
    height: 20px;
  }

  .spin input {
    width: 143px;
    height: 20px;
    padding-right: 2px;
    background: #0e0e0e;
    text-align: right;
  }

  .caret {
    position: absolute;
    right: 43px;
    top: 2px;
    width: 1px;
    height: 16px;
    background: #f01010;
  }

  .flat {
    border: 1px solid #191919;
    border-radius: 3px;
    background: #202020;
    height: 26px;
  }

  .tapbtn {
    grid-column: 1 / 3;
    height: 24px;
    margin-top: 6px;
  }

  .actions {
    grid-column: 1 / 3;
    display: flex;
    justify-content: flex-end;
    gap: 5px;
    margin: 10px 5px 0 0;
  }

  .actions .flat {
    width: 84px;
  }

  .def {
    box-shadow: inset 0 0 0 2px #161616;
  }
</style>
